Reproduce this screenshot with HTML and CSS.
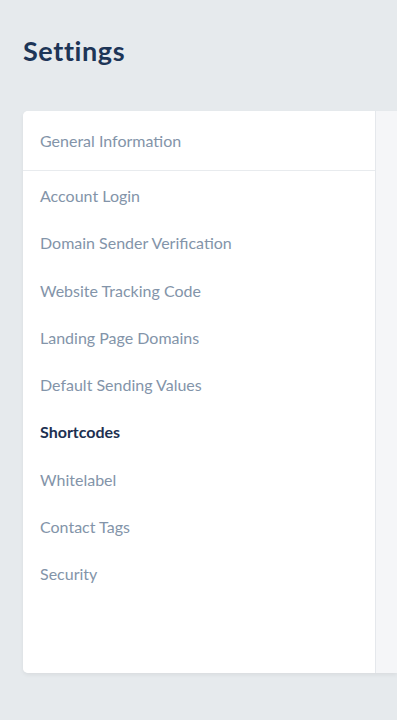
FILE: index.html
```html
<!DOCTYPE html>
<html lang="en">
<head>
    <meta charset="UTF-8">
    <meta name="viewport" content="width=device-width, initial-scale=1.0">
    <title>Settings</title>
    <link rel="stylesheet" href="styles.css">
</head>
<body>
    <div class="page">
        <h1 class="page-title">Settings</h1>

        <div class="settings-card">
            <nav class="settings-nav">
                <a class="nav-item nav-first" href="#">General Information</a>
                <a class="nav-item" href="#">Account Login</a>
                <a class="nav-item" href="#">Domain Sender Verification</a>
                <a class="nav-item" href="#">Website Tracking Code</a>
                <a class="nav-item" href="#">Landing Page Domains</a>
                <a class="nav-item" href="#">Default Sending Values</a>
                <a class="nav-item active" href="#">Shortcodes</a>
                <a class="nav-item" href="#">Whitelabel</a>
                <a class="nav-item" href="#">Contact Tags</a>
                <a class="nav-item" href="#">Security</a>
            </nav>
            <div class="settings-content"></div>
        </div>
    </div>
</body>
</html>
```

FILE: styles.css
```css
* {
    margin: 0;
    padding: 0;
    box-sizing: border-box;
}

body {
    font-family: Lato, 'Noto Sans', sans-serif;
    background: #e6eaed;
    min-height: 100vh;
    overflow: hidden;
}

.page {
    padding: 35px 0 0 23px;
}

.page-title {
    font-size: 27px;
    font-weight: 700;
    color: #1d3557;
    letter-spacing: 0.6px;
    line-height: 32px;
    margin-bottom: 44px;
}

/* card runs off the right edge, so only the left corners are rounded */
.settings-card {
    display: flex;
    height: 562px;
    background: #f5f6f8;
    border-radius: 5px 0 0 5px;
    box-shadow: 0 2px 4px rgba(0, 0, 0, 0.06);
}

.settings-nav {
    width: 353px;
    flex-shrink: 0;
    background: white;
    border-right: 1px solid #e5e8ec;
    border-radius: 5px 0 0 5px;
    display: flex;
    flex-direction: column;
}

.nav-item {
    display: block;
    padding: 0 17px;
    line-height: 47.3px;
    font-size: 16px;
    color: #8394a9;
    text-decoration: none;
}

.nav-first {
    line-height: 59px;
    border-bottom: 1px solid #e8ebee;
    margin-bottom: 1px;
}

.nav-item.active {
    color: #1d3050;
    font-weight: 700;
}

.settings-content {
    flex: 1;
}
```
